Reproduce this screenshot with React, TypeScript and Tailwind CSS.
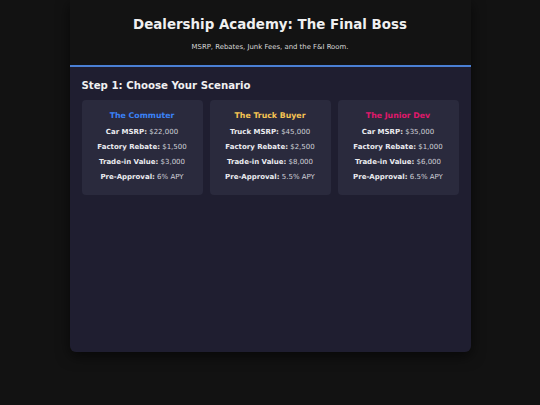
const scenarios = [
  {
    name: 'The Commuter',
    color: 'text-[#3b82f6]',
    rows: [
      ['Car MSRP:', '$22,000'],
      ['Factory Rebate:', '$1,500'],
      ['Trade-in Value:', '$3,000'],
      ['Pre-Approval:', '6% APY'],
    ],
  },
  {
    name: 'The Truck Buyer',
    color: 'text-[#f6c453]',
    rows: [
      ['Truck MSRP:', '$45,000'],
      ['Factory Rebate:', '$2,500'],
      ['Trade-in Value:', '$8,000'],
      ['Pre-Approval:', '5.5% APY'],
    ],
  },
  {
    name: 'The Junior Dev',
    color: 'text-[#e0186c]',
    rows: [
      ['Car MSRP:', '$35,000'],
      ['Factory Rebate:', '$1,000'],
      ['Trade-in Value:', '$6,000'],
      ['Pre-Approval:', '6.5% APY'],
    ],
  },
];

export default function App() {
  return (
    <div className="min-h-[405px] bg-[#121212] font-['DejaVu_Sans',sans-serif]">
      <div className="mx-auto w-[401px] rounded-b-[6px] overflow-hidden shadow-[0_4px_14px_rgba(0,0,0,0.6)]">
        {/* header */}
        <div className="bg-[#131313] h-[67px] flex flex-col items-center pt-[16px] border-b-2 border-[#4a7fd4]">
          <h1 className="text-[13.4px] font-bold text-[#f0f0f0] leading-[18px]">
            Dealership Academy: The Final Boss
          </h1>
          <p className="mt-[8px] text-[6.9px] leading-[10px] text-[#d8d8d8]">MSRP, Rebates, Junk Fees, and the F&amp;I Room.</p>
        </div>

        <div className="bg-[#1f1e30] h-[285px] px-[12px] pt-[11px]">
          <h2 className="text-[10.2px] font-bold text-[#f0f0f0] leading-[16px]">Step 1: Choose Your Scenario</h2>

          <div className="mt-[6px] grid grid-cols-3 gap-[7px]">
            {scenarios.map((s) => (
              <div key={s.name} className="bg-[#2a2a3d] rounded-[4px] h-[95px] flex flex-col items-center pt-[10px]">
                <div className={`text-[7.8px] font-bold ${s.color} leading-[12px]`}>{s.name}</div>
                <div className="mt-[5px] flex flex-col items-center gap-[4px]">
                  {s.rows.map(([label, value]) => (
                    <div key={label} className="text-[7px] leading-[11px] text-[#d0d0d8]">
                      <span className="font-bold text-[#ececf0]">{label}</span> {value}
                    </div>
                  ))}
                </div>
              </div>
            ))}
          </div>
        </div>
      </div>
    </div>
  );
}
